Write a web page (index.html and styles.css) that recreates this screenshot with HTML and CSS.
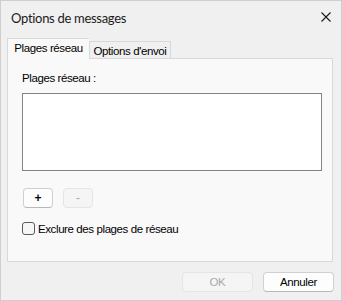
FILE: index.html
```html
<!DOCTYPE html>
<html lang="fr">
<head>
<meta charset="utf-8">
<title>Options de messages</title>
<link rel="stylesheet" href="styles.css">
</head>
<body>
<div class="dialog">
  <div class="titlebar">
    <span class="title">Options de messages</span>
    <svg class="close" width="10" height="10" viewBox="0 0 10 10"><path d="M0.5 0.5 L9.5 9.5 M9.5 0.5 L0.5 9.5" stroke="#1a1a1a" stroke-width="1.1" fill="none"/></svg>
  </div>
  <div class="tabs">
    <div class="tab active">Plages réseau</div>
    <div class="tab">Options d'envoi</div>
  </div>
  <div class="panel">
    <div class="label">Plages réseau :</div>
    <div class="listbox"></div>
    <div class="btnrow">
      <button class="btn small">+</button>
      <button class="btn small disabled">-</button>
    </div>
    <label class="check"><span class="box"></span><span>Exclure des plages de réseau</span></label>
  </div>
  <div class="footer">
    <button class="btn wide disabled">OK</button>
    <button class="btn wide">Annuler</button>
  </div>
</div>
</body>
</html>
```
FILE: styles.css
```css
html, body { margin: 0; padding: 0; background: #f0f0f0; }
.dialog {
  width: 342px; height: 301px; box-sizing: border-box;
  border: 1px solid #cfcfcf;
  background: #f0f0f0;
  font-family: "Liberation Sans", Arial, sans-serif;
  font-size: 11.5px; letter-spacing: -0.4px; color: #000;
  display: flex; flex-direction: column;
}
.titlebar {
  height: 37px; display: flex; align-items: center; justify-content: space-between;
  padding: 0 10px 0 10px; box-sizing: border-box;
}
.title { font-family: Lato, "Open Sans", sans-serif; font-size: 13px; letter-spacing: -0.3px; color: #1b1b1b; margin-top: -4px; }
.close { margin-top: -6px; }
.tabs { display: flex; align-items: flex-end; height: 20px; padding-left: 6px; }
.tab {
  box-sizing: border-box; width: 82px; height: 17px; padding: 2px 0 0 0;
  border: 1px solid #d9d9d9; border-bottom: none;
  background: #f0f0f0; display: flex; align-items: center; justify-content: center;
  color: #000;
}
.tab.active {
  height: 21px; margin-bottom: -1px; position: relative; z-index: 1;
  background: #f9f9f9; padding: 0 0 2px 0; border-right: none;
}
.panel {
  box-sizing: border-box; height: 204px; margin: 0 8px 0 6px;
  border: 1px solid #d9d9d9; background: #f9f9f9;
  padding: 12px 10px 0 14px;
  display: flex; flex-direction: column;
}
.label { height: 15px; line-height: 15px; color: #000; }
.listbox {
  margin-top: 7px; height: 78px; width: 300px; box-sizing: border-box;
  border: 1px solid #858585; background: #fff;
}
.btnrow { display: flex; gap: 10px; margin-top: 17px; padding-left: 1px; }
.btn {
  box-sizing: border-box; height: 20px; padding: 0; margin: 0;
  border: 1px solid #d0d0d0; border-bottom-color: #b8b8b8; border-radius: 4px;
  background: #fdfdfd; font-family: "Liberation Sans", Arial, sans-serif;
  font-size: 11.5px; letter-spacing: -0.4px; color: #000; line-height: 18px;
}
.btn.small { width: 30px; font-weight: bold; font-size: 12px; letter-spacing: 0; }
.btn.disabled { background: #f5f5f5; border-color: #e5e5e5; color: #a8a8a8; font-weight: normal; }
.check { display: flex; align-items: center; gap: 3px; margin-top: 14px; height: 13px; }
.box {
  width: 13px; height: 13px; box-sizing: border-box;
  border: 1px solid #5a5a5a; border-radius: 3px; background: #f6f6f6;
}
.footer { display: flex; justify-content: flex-end; gap: 10px; margin-top: 10px; padding-right: 7px; }
.btn.wide { width: 71px; }
```
